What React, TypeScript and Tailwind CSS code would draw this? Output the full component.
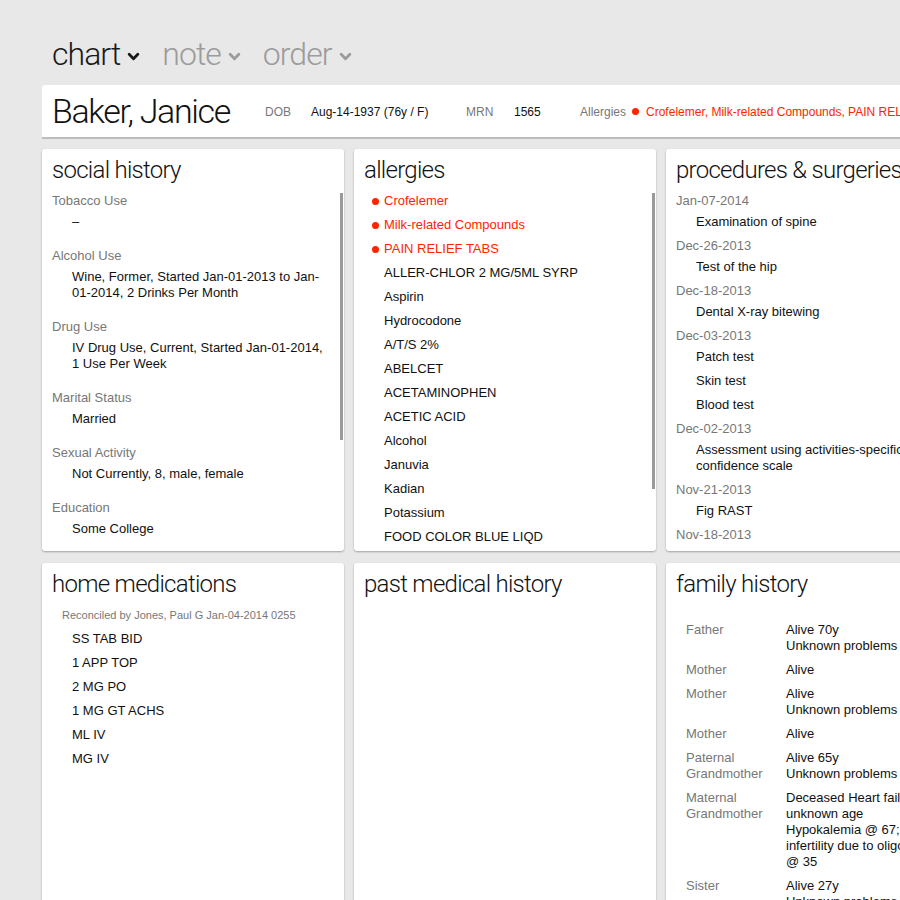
import React from 'react';

const TITLE_FONT = "font-['Roboto','Liberation_Sans',sans-serif] font-light tracking-[-0.03em]";

const socialHistory: { label: string; value: string }[] = [
  { label: 'Tobacco Use', value: '–' },
  { label: 'Alcohol Use', value: 'Wine, Former, Started Jan-01-2013 to Jan-01-2014, 2 Drinks Per Month' },
  { label: 'Drug Use', value: 'IV Drug Use, Current, Started Jan-01-2014, 1 Use Per Week' },
  { label: 'Marital Status', value: 'Married' },
  { label: 'Sexual Activity', value: 'Not Currently, 8, male, female' },
  { label: 'Education', value: 'Some College' },
];

const allergies: { name: string; severe?: boolean }[] = [
  { name: 'Crofelemer', severe: true },
  { name: 'Milk-related Compounds', severe: true },
  { name: 'PAIN RELIEF TABS', severe: true },
  { name: 'ALLER-CHLOR 2 MG/5ML SYRP' },
  { name: 'Aspirin' },
  { name: 'Hydrocodone' },
  { name: 'A/T/S 2%' },
  { name: 'ABELCET' },
  { name: 'ACETAMINOPHEN' },
  { name: 'ACETIC ACID' },
  { name: 'Alcohol' },
  { name: 'Januvia' },
  { name: 'Kadian' },
  { name: 'Potassium' },
  { name: 'FOOD COLOR BLUE LIQD' },
];

const procedures: { date: string; items: string[] }[] = [
  { date: 'Jan-07-2014', items: ['Examination of spine'] },
  { date: 'Dec-26-2013', items: ['Test of the hip'] },
  { date: 'Dec-18-2013', items: ['Dental X-ray bitewing'] },
  { date: 'Dec-03-2013', items: ['Patch test', 'Skin test', 'Blood test'] },
  { date: 'Dec-02-2013', items: ['Assessment using activities-specific confidence scale'] },
  { date: 'Nov-21-2013', items: ['Fig RAST'] },
  { date: 'Nov-18-2013', items: ['Endoscopic examination'] },
];

const homeMeds = ['SS TAB BID', '1 APP TOP', '2 MG PO', '1 MG GT ACHS', 'ML IV', 'MG IV'];

const familyHistory: { relation: string; lines: string[] }[] = [
  { relation: 'Father', lines: ['Alive 70y', 'Unknown problems'] },
  { relation: 'Mother', lines: ['Alive'] },
  { relation: 'Mother', lines: ['Alive', 'Unknown problems'] },
  { relation: 'Mother', lines: ['Alive'] },
  { relation: 'Paternal Grandmother', lines: ['Alive 65y', 'Unknown problems'] },
  {
    relation: 'Maternal Grandmother',
    lines: ['Deceased Heart failure', 'unknown age', 'Hypokalemia @ 67;', 'infertility due to oligospermia', '@ 35'],
  },
  { relation: 'Sister', lines: ['Alive 27y', 'Unknown problems'] },
];

// small bold chevron used next to the top tabs
const Chevron: React.FC<{ className?: string }> = ({ className }) => (
  <svg viewBox="0 0 12 8" className={className} fill="none" stroke="currentColor" strokeWidth={2.6} strokeLinecap="round" strokeLinejoin="round">
    <path d="M2 2l4 4 4-4" />
  </svg>
);

const Card: React.FC<{ title: string; thumb?: string; children?: React.ReactNode }> = ({ title, thumb, children }) => (
  <section className="relative h-[402px] w-[302px] shrink-0 overflow-hidden rounded-[3px] bg-white shadow-[0_1px_2px_rgba(0,0,0,0.3)]">
    <h2 className={`${TITLE_FONT} whitespace-nowrap px-[10px] pt-[6px] text-[24px] leading-[30px] text-[#111]`}>{title}</h2>
    {children}
    {thumb && <div className={`absolute right-[1px] w-[3px] bg-[#9a9a9a] ${thumb}`} />}
  </section>
);

export default function App() {
  return (
    <div className="h-[900px] w-[900px] overflow-hidden bg-[#e8e8e8] font-['Liberation_Sans',Arial,sans-serif] text-[13px] text-[#111]">
      <div className="w-[1000px] pl-[42px]">
        {/* top tabs */}
        <nav className={`${TITLE_FONT} flex h-[85px] items-start gap-[22px] pl-[10px] pt-[34px] text-[32px] leading-[40px]`}>
          <div className="flex items-center gap-[7px] text-[#1a1a1a]">
            <span>chart</span>
            <Chevron className="mt-[4px] h-[9px] w-[13px]" />
          </div>
          <div className="flex items-center gap-[7px] text-[#9b9b9b]">
            <span>note</span>
            <Chevron className="mt-[4px] h-[9px] w-[13px]" />
          </div>
          <div className="flex items-center gap-[7px] text-[#9b9b9b]">
            <span>order</span>
            <Chevron className="mt-[4px] h-[9px] w-[13px]" />
          </div>
        </nav>

        {/* patient banner */}
        <header className="flex h-[54px] w-[960px] items-center whitespace-nowrap rounded-t-[3px] border-b-2 border-[#bdbdbd] bg-white pl-[10px] text-[12px]">
          <h1 className={`${TITLE_FONT} w-[213px] pb-[1px] text-[34px] leading-[40px] tracking-[-0.04em] text-[#111]`}>Baker, Janice</h1>
          <span className="mt-[1px] w-[46px] text-[#777]">DOB</span>
          <span className="mt-[1px] w-[155px] text-[#111]">Aug-14-1937 (76y / F)</span>
          <span className="mt-[1px] w-[48px] text-[#777]">MRN</span>
          <span className="mt-[1px] w-[66px] text-[#111]">1565</span>
          <span className="mt-[1px] text-[#777]">Allergies</span>
          <span className="ml-[6px] mr-[7px] h-[7px] w-[7px] rounded-full bg-[#ff2400]" />
          <span className="mt-[1px] text-[#ff2400]">Crofelemer, Milk-related Compounds, PAIN RELIEF TABS</span>
        </header>

        <div className="mt-[10px] flex w-[926px] flex-wrap gap-x-[10px] gap-y-[12px]">
          <Card title="social history" thumb="top-[44px] h-[247px]">
            <dl className="pl-[10px] pr-[18px] pt-[6px]">
              {socialHistory.map((item) => (
                <div key={item.label} className="mb-[16px]">
                  <dt className="leading-[20px] text-[#777]">{item.label}</dt>
                  <dd className="mt-[3px] pl-[20px] leading-[16px]">{item.value}</dd>
                </div>
              ))}
            </dl>
          </Card>

          <Card title="allergies" thumb="top-[44px] h-[296px]">
            <ul className="pt-[4px]">
              {allergies.map((a) => (
                <li key={a.name} className={`flex items-center pl-[18px] leading-[24px] ${a.severe ? 'text-[#ff2400]' : ''}`}>
                  <span className={`mr-[5px] h-[7px] w-[7px] rounded-full ${a.severe ? 'bg-[#ff2400]' : ''}`} />
                  {a.name}
                </li>
              ))}
            </ul>
          </Card>

          <Card title="procedures & surgeries">
            <div className="px-[10px] pt-[5px]">
              {procedures.map((p) => (
                <div key={p.date} className="pt-[1px]">
                  <div className="leading-[20px] text-[#777]">{p.date}</div>
                  {p.items.map((it) => (
                    <div key={it} className="pb-[5px] pl-[20px] pt-[3px] leading-[16px]">{it}</div>
                  ))}
                </div>
              ))}
            </div>
          </Card>

          <Card title="home medications">
            <div className="pl-[20px] pt-[8px] text-[11px] leading-[16px] text-[#777]">Reconciled by Jones, Paul G Jan-04-2014 0255</div>
            <ul className="pt-[4px]">
              {homeMeds.map((m) => (
                <li key={m} className="pl-[30px] leading-[24px]">{m}</li>
              ))}
            </ul>
          </Card>

          <Card title="past medical history" />

          <Card title="family history">
            <div className="flex flex-col gap-[8px] pl-[20px] pt-[23px]">
              {familyHistory.map((f, i) => (
                <div key={i} className="flex leading-[16px]">
                  <div className="w-[100px] shrink-0 text-[#777]">{f.relation}</div>
                  <div className="whitespace-nowrap">
                    {f.lines.map((l) => (
                      <div key={l}>{l}</div>
                    ))}
                  </div>
                </div>
              ))}
            </div>
          </Card>
        </div>
      </div>
    </div>
  );
}
